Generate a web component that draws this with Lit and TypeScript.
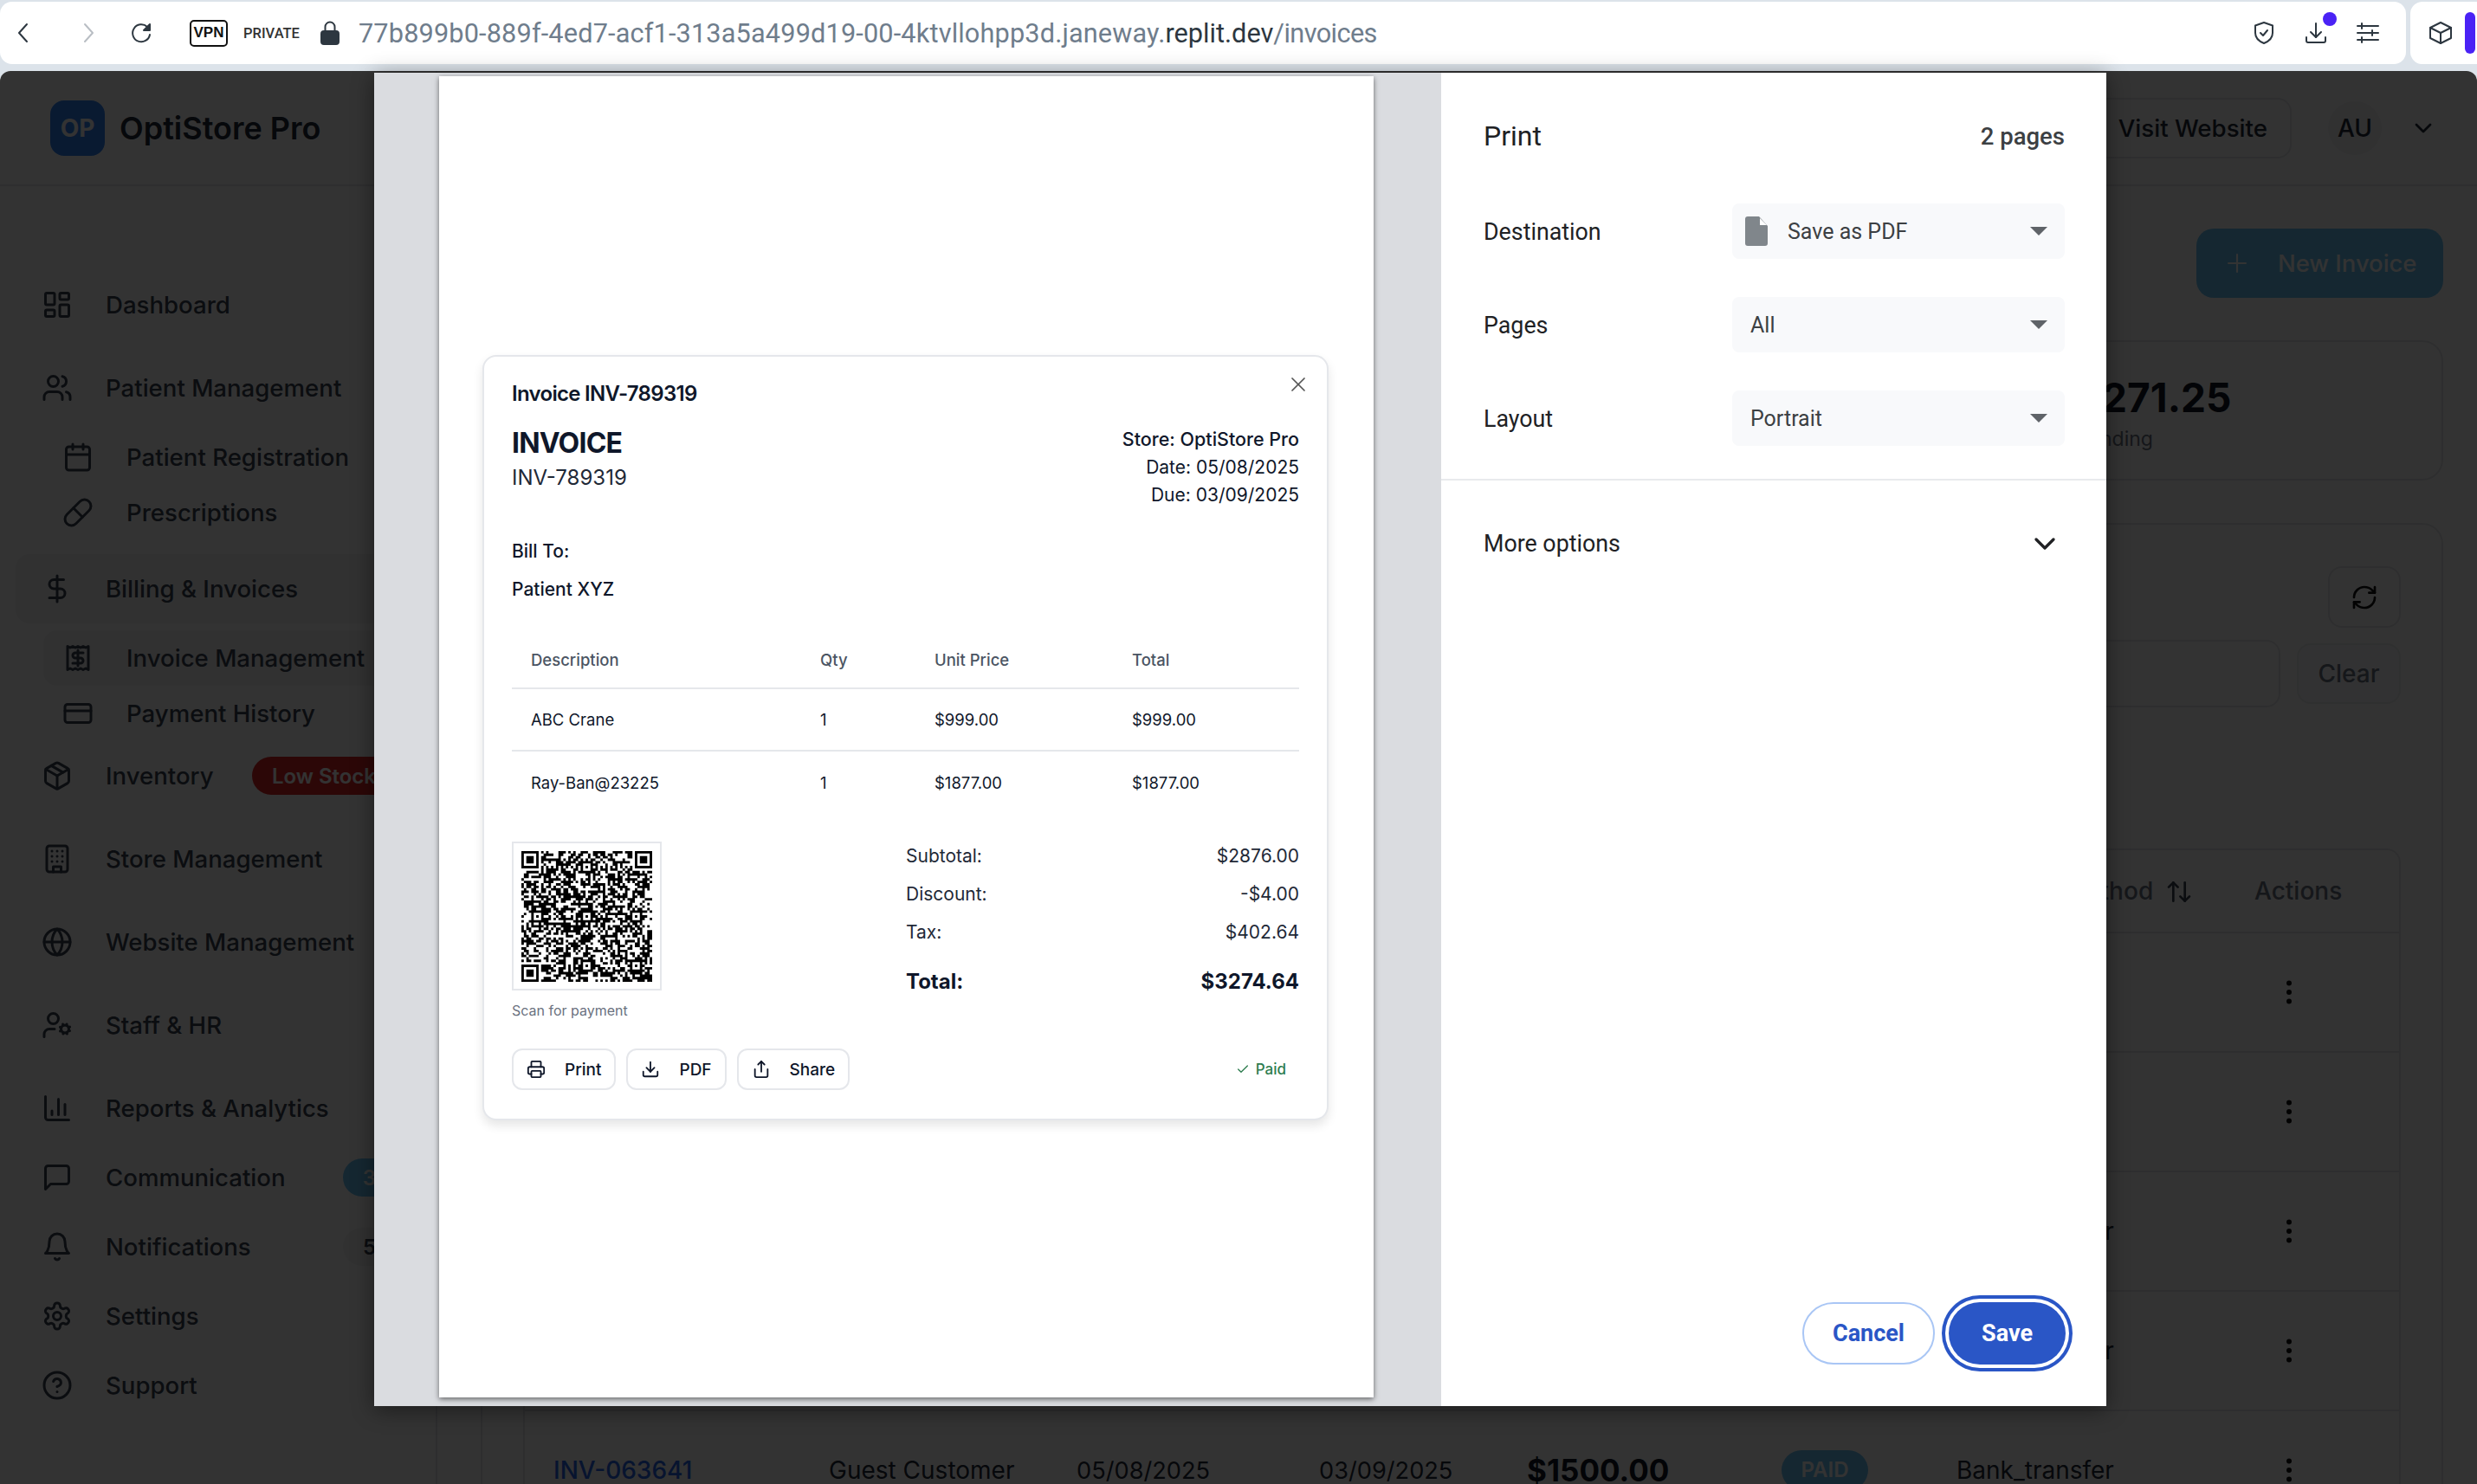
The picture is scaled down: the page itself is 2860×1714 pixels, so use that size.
import { LitElement, html, css, svg } from 'lit';
import { customElement } from 'lit/decorators.js';

// lucide style icons, stroke is drawn by the wrapper below
const ICONS: Record<string, any> = {
  dashboard: svg`<rect x="3" y="3" width="7" height="9" rx="1"/><rect x="14" y="3" width="7" height="5" rx="1"/><rect x="14" y="12" width="7" height="9" rx="1"/><rect x="3" y="16" width="7" height="5" rx="1"/>`,
  users: svg`<path d="M16 21v-2a4 4 0 0 0-4-4H6a4 4 0 0 0-4 4v2"/><circle cx="9" cy="7" r="4"/><path d="M22 21v-2a4 4 0 0 0-3-3.87"/><path d="M16 3.13a4 4 0 0 1 0 7.75"/>`,
  calendar: svg`<path d="M8 2v4"/><path d="M16 2v4"/><rect x="3" y="4" width="18" height="18" rx="2"/><path d="M3 10h18"/>`,
  pill: svg`<path d="m10.5 20.5 10-10a4.95 4.95 0 1 0-7-7l-10 10a4.95 4.95 0 1 0 7 7Z"/><path d="m8.5 8.5 7 7"/>`,
  dollar: svg`<line x1="12" y1="2" x2="12" y2="22"/><path d="M17 5H9.5a3.5 3.5 0 0 0 0 7h5a3.5 3.5 0 0 1 0 7H6"/>`,
  receipt: svg`<path d="M4 3v18l2-1 2 1 2-1 2 1 2-1 2 1 2-1 2 1V3l-2 1-2-1-2 1-2-1-2 1-2-1-2 1Z"/><path d="M16 8h-6a2 2 0 1 0 0 4h4a2 2 0 1 1 0 4H8"/><path d="M12 18v-12"/>`,
  card: svg`<rect x="2" y="5" width="20" height="14" rx="2"/><line x1="2" y1="10" x2="22" y2="10"/>`,
  box: svg`<path d="m7.5 4.27 9 5.15"/><path d="M21 8a2 2 0 0 0-1-1.73l-7-4a2 2 0 0 0-2 0l-7 4A2 2 0 0 0 3 8v8a2 2 0 0 0 1 1.73l7 4a2 2 0 0 0 2 0l7-4A2 2 0 0 0 21 16Z"/><path d="m3.3 7 8.7 5 8.7-5"/><path d="M12 22V12"/>`,
  store: svg`<rect x="4" y="2" width="16" height="20" rx="2"/><path d="M9 22v-4h6v4"/><path d="M8 6h.01M12 6h.01M16 6h.01M8 10h.01M12 10h.01M16 10h.01M8 14h.01M12 14h.01M16 14h.01"/>`,
  globe: svg`<circle cx="12" cy="12" r="10"/><path d="M12 2a14.5 14.5 0 0 0 0 20 14.5 14.5 0 0 0 0-20"/><path d="M2 12h20"/>`,
  staff: svg`<circle cx="18" cy="15" r="3"/><circle cx="9" cy="7" r="4"/><path d="M10 15H6a4 4 0 0 0-4 4v2"/><path d="m21.7 16.4-.9-.3M15.2 13.9l-.9-.3M16.6 18.7l.3-.9M19.1 12.2l.3-.9M19.6 18.7l-.4-1M16.8 12.3l-.4-1M14.3 16.6l1-.4M20.7 13.8l1-.4"/>`,
  chart: svg`<path d="M3 3v16a2 2 0 0 0 2 2h16"/><path d="M18 17V9"/><path d="M13 17V5"/><path d="M8 17v-3"/>`,
  message: svg`<path d="M21 15a2 2 0 0 1-2 2H7l-4 4V5a2 2 0 0 1 2-2h14a2 2 0 0 1 2 2z"/>`,
  bell: svg`<path d="M6 8a6 6 0 0 1 12 0c0 7 3 9 3 9H3s3-2 3-9"/><path d="M10.3 21a1.94 1.94 0 0 0 3.4 0"/>`,
  settings: svg`<path d="M12.22 2h-.44a2 2 0 0 0-2 2v.18a2 2 0 0 1-1 1.73l-.43.25a2 2 0 0 1-2 0l-.15-.08a2 2 0 0 0-2.73.73l-.22.38a2 2 0 0 0 .73 2.73l.15.1a2 2 0 0 1 1 1.72v.51a2 2 0 0 1-1 1.74l-.15.09a2 2 0 0 0-.73 2.73l.22.38a2 2 0 0 0 2.73.73l.15-.08a2 2 0 0 1 2 0l.43.25a2 2 0 0 1 1 1.73V20a2 2 0 0 0 2 2h.44a2 2 0 0 0 2-2v-.18a2 2 0 0 1 1-1.73l.43-.25a2 2 0 0 1 2 0l.15.08a2 2 0 0 0 2.73-.73l.22-.39a2 2 0 0 0-.73-2.73l-.15-.08a2 2 0 0 1-1-1.74v-.5a2 2 0 0 1 1-1.74l.15-.09a2 2 0 0 0 .73-2.73l-.22-.38a2 2 0 0 0-2.73-.73l-.15.08a2 2 0 0 1-2 0l-.43-.25a2 2 0 0 1-1-1.73V4a2 2 0 0 0-2-2z"/><circle cx="12" cy="12" r="3"/>`,
  help: svg`<circle cx="12" cy="12" r="10"/><path d="M9.09 9a3 3 0 0 1 5.83 1c0 2-3 3-3 3"/><path d="M12 17h.01"/>`,
  printer: svg`<path d="M6 18H4a2 2 0 0 1-2-2v-5a2 2 0 0 1 2-2h16a2 2 0 0 1 2 2v5a2 2 0 0 1-2 2h-2"/><path d="M6 9V3a1 1 0 0 1 1-1h10a1 1 0 0 1 1 1v6"/><rect x="6" y="14" width="12" height="8" rx="1"/>`,
  download: svg`<path d="M21 15v4a2 2 0 0 1-2 2H5a2 2 0 0 1-2-2v-4"/><path d="m7 10 5 5 5-5"/><path d="M12 15V3"/>`,
  share: svg`<path d="M4 12v8a2 2 0 0 0 2 2h12a2 2 0 0 0 2-2v-8"/><path d="m16 6-4-4-4 4"/><path d="M12 2v13"/>`,
  check: svg`<path d="M20 6 9 17l-5-5"/>`,
  close: svg`<path d="M18 6 6 18"/><path d="m6 6 12 12"/>`,
  chevron: svg`<path d="m6 9 6 6 6-6"/>`,
  plus: svg`<path d="M5 12h14"/><path d="M12 5v14"/>`,
  refresh: svg`<path d="M3 12a9 9 0 0 1 9-9 9.75 9.75 0 0 1 6.74 2.74L21 8"/><path d="M21 3v5h-5"/><path d="M21 12a9 9 0 0 1-9 9 9.75 9.75 0 0 1-6.74-2.74L3 16"/><path d="M8 16H3v5"/>`,
  sort: svg`<path d="m21 16-4 4-4-4"/><path d="M17 20V4"/><path d="m3 8 4-4 4 4"/><path d="M7 4v16"/>`,
  kebab: svg`<circle cx="12" cy="5" r="1"/><circle cx="12" cy="12" r="1"/><circle cx="12" cy="19" r="1"/>`,
};

function icon(name: string) {
  return html`<svg class="ic" viewBox="0 0 24 24" fill="none" stroke="currentColor" stroke-width="2" stroke-linecap="round" stroke-linejoin="round">${ICONS[name]}</svg>`;
}

const iconBase = css`
  .ic { width: 36px; height: 36px; flex: none; display: block; }
`;

// fake qr: real structure (finders, timing, alignment) with seeded noise for the data
function qrPath(): string {
  const n = 53;
  let seed = 789319;
  const rnd = () => {
    seed = (seed * 1664525 + 1013904223) >>> 0;
    return (seed >>> 16) / 65536;
  };
  const grid: boolean[][] = [];
  for (let y = 0; y < n; y++) {
    grid.push([]);
    for (let x = 0; x < n; x++) grid[y].push(rnd() < 0.55);
  }
  const finder = (ox: number, oy: number) => {
    for (let y = -1; y < 8; y++) for (let x = -1; x < 8; x++) {
      const gx = ox + x, gy = oy + y;
      if (gx < 0 || gy < 0 || gx >= n || gy >= n) continue;
      const inside = x >= 0 && x < 7 && y >= 0 && y < 7;
      const ring = x === 0 || x === 6 || y === 0 || y === 6;
      const core = x >= 2 && x <= 4 && y >= 2 && y <= 4;
      grid[gy][gx] = inside && (ring || core);
    }
  };
  for (let i = 8; i < n - 8; i++) { grid[6][i] = i % 2 === 0; grid[i][6] = i % 2 === 0; }
  const align = (cx: number, cy: number) => {
    for (let y = -2; y <= 2; y++) for (let x = -2; x <= 2; x++) {
      grid[cy + y][cx + x] = Math.max(Math.abs(x), Math.abs(y)) !== 1;
    }
  };
  [[26, 6], [6, 26], [26, 26], [46, 26], [26, 46], [46, 46]].forEach(([x, y]) => align(x, y));
  finder(0, 0); finder(n - 7, 0); finder(0, n - 7);
  let d = '';
  grid.forEach((row, y) => row.forEach((on, x) => { if (on) d += `M${x} ${y}h1v1h-1z`; }));
  return d;
}

const NAV = [
  { label: 'Dashboard', icon: 'dashboard', spaced: true },
  { label: 'Patient Management', icon: 'users', subs: [
    { label: 'Patient Registration', icon: 'calendar' },
    { label: 'Prescriptions', icon: 'pill' },
  ] },
  { label: 'Billing & Invoices', icon: 'dollar', active: true, subs: [
    { label: 'Invoice Management', icon: 'receipt', active: true },
    { label: 'Payment History', icon: 'card' },
  ] },
  { label: 'Inventory', icon: 'box', badge: 'Low Stock', badgeCls: 'red', spaced: true },
  { label: 'Store Management', icon: 'store', spaced: true },
  { label: 'Website Management', icon: 'globe', spaced: true },
  { label: 'Staff & HR', icon: 'staff', spaced: true },
  { label: 'Reports & Analytics', icon: 'chart' },
  { label: 'Communication', icon: 'message', badge: '3', badgeCls: 'blue' },
  { label: 'Notifications', icon: 'bell', badge: '5', badgeCls: 'gray' },
  { label: 'Settings', icon: 'settings' },
  { label: 'Support', icon: 'help' },
] as any[];

// only what shows past the print dialog is filled in
const ROWS = [
  { method: '' },
  { method: '' },
  { method: 'Bank_transfer' },
  { method: 'Bank_transfer' },
  { id: 'INV-063641', name: 'Guest Customer', issued: '05/08/2025', due: '03/09/2025', amount: '$1500.00', paid: true, method: 'Bank_transfer' },
] as any[];

@customElement('browser-bar')
class BrowserBar extends LitElement {
  static styles = css`
    :host { display: flex; gap: 5px; height: 82px; padding-top: 2px; box-sizing: border-box; background: #dce3ea; }
    .box { background: #fff; height: 72px; border-radius: 14px; display: flex; align-items: center; }
    .main { width: 2778px; flex: none; padding: 0 31px 0 14px; box-sizing: border-box; }
    .side { flex: 1; border-radius: 14px 0 0 14px; padding-left: 22px; gap: 15px; }
    svg { display: block; flex: none; fill: none; stroke: #2d3740; stroke-width: 2; stroke-linecap: round; stroke-linejoin: round; }
    .nav { width: 26px; height: 26px; }
    .fwd { margin-left: 49px; stroke: #b9bec4; }
    .reload { margin-left: 36px; }
    .vpn { margin-left: 42px; width: 44px; height: 31px; box-sizing: border-box; border: 2px solid #111; border-radius: 5px; font: 600 17px "Liberation Sans", sans-serif; color: #111; display: flex; align-items: center; justify-content: center; }
    .private { margin-left: 18px; font: 500 16.5px Roboto, sans-serif; color: #333; }
    .lock { margin-left: 24px; width: 22px; height: 28px; }
    .url { margin-left: 22px; font: 400 30.7px Roboto, sans-serif; color: #6f7d8c; white-space: nowrap; letter-spacing: 0.15px; }
    .url b { font-weight: 400; color: #2d3740; letter-spacing: 0; }
    .url i { font-style: normal; letter-spacing: -0.6px; }
    .tools { margin-left: auto; display: flex; gap: 34px; position: relative; }
    .tools svg { width: 26px; height: 26px; }
    .dot { position: absolute; left: 81px; top: -11px; width: 16px; height: 16px; border-radius: 50%; background: #4a22f5; }
    .bar { width: 12px; height: 48px; border-radius: 6px; background: #4a22f5; }
    .cube { width: 26px; height: 26px; }
  `;

  render() {
    return html`
      <div class="box main">
        <svg class="nav" viewBox="0 0 26 26"><path d="M17 3 8 13l9 10"/></svg>
        <svg class="nav fwd" viewBox="0 0 26 26"><path d="m9 3 9 10-9 10"/></svg>
        <svg class="nav reload" viewBox="0 0 26 26"><path d="M19 6a10 10 0 1 0 3 9"/><path d="M22 3v7h-7z" fill="#2d3740"/></svg>
        <div class="vpn">VPN</div>
        <div class="private">PRIVATE</div>
        <svg class="lock" viewBox="0 0 22 28"><path d="M5.5 13V7a5.5 5.5 0 0 1 11 0v6"/><rect x="1" y="12" width="20" height="15" rx="3" fill="#2d3740"/></svg>
        <div class="url">77b899b0-889f-4ed7-acf1-313a5a499d19-00-4ktvllohpp3d.janeway.<b>replit.dev</b><i>/invoices</i></div>
        <div class="tools">
          <svg viewBox="0 0 26 26"><path d="M13 1 23 4.5V13c0 6-5 10-10 12C8 23 3 19 3 13V4.500Z"/><path d="m9 13 3 3 5-6"/></svg>
          <svg viewBox="0 0 26 26"><path d="M13 2v16"/><path d="m7 12 6 6 6-6"/><path d="M2 18v4a2 2 0 0 0 2 2h18a2 2 0 0 0 2-2v-4"/></svg>
          <svg viewBox="0 0 26 26"><path d="M1 5h24M1 13h24M1 21h24M6 2v6M18 10v6M6 18v6"/></svg>
          <span class="dot"></span>
        </div>
      </div>
      <div class="box side">
        <svg class="cube" viewBox="0 0 26 26"><path d="M13 1 25 7v12l-12 6-12-6V7Z"/><path d="m1 7 12 6 12-6"/><path d="M13 13v12"/></svg>
        <div class="bar"></div>
      </div>
    `;
  }
}

@customElement('store-sidebar')
class StoreSidebar extends LitElement {
  static styles = [iconBase, css`
    :host { display: block; width: 505px; flex: none; box-sizing: border-box; border-right: 2px solid #e5e7eb; font-family: Inter, sans-serif; color: #374151; }
    .brand { height: 133px; border-bottom: 2px solid #e5e7eb; box-sizing: border-box; display: flex; align-items: center; gap: 17px; padding-left: 58px; }
    .logo { width: 63px; height: 64px; border-radius: 16px; background: #3182f6; color: #fff; font-weight: 700; font-size: 28px; display: flex; align-items: center; justify-content: center; }
    .name { font-size: 36px; font-weight: 600; color: #1f2937; }
    nav { padding: 97px 16px 0 18px; }
    .item { height: 80px; border-radius: 16px; padding: 0 30px; display: flex; align-items: center; gap: 38px; font-size: 27.6px; font-weight: 500; white-space: nowrap; }
    .item.spaced { margin-bottom: 16px; }
    .item.active, .sub.active { background: #f3f4f6; }
    .subs { padding: 8px 0 0 32px; }
    .subs.gap { margin-bottom: 16px; }
    .sub { height: 64px; border-radius: 16px; padding-left: 22px; display: flex; align-items: center; gap: 38px; font-size: 27.6px; font-weight: 500; white-space: nowrap; }
    .badge { margin-left: auto; height: 44px; border-radius: 22px; padding: 0 23px; display: flex; align-items: center; font-size: 24px; font-weight: 600; }
    .red { background: #dc2626; color: #fff; }
    .blue { background: #69c3f5; color: #fff; }
    .gray { background: #f3f4f6; color: #374151; }
  `];

  render() {
    return html`
      <div class="brand"><div class="logo">OP</div><div class="name">OptiStore Pro</div></div>
      <nav>
        ${NAV.map((n, i) => html`
          <div class="item ${n.spaced ? 'spaced' : ''} ${n.active ? 'active' : ''}">
            ${icon(n.icon)}<span>${n.label}</span>
            ${n.badge ? html`<span class="badge ${n.badgeCls}">${n.badge}</span>` : ''}
          </div>
          ${n.subs ? html`<div class="subs ${i === 1 ? 'gap' : ''}">
            ${n.subs.map((s: any) => html`<div class="sub ${s.active ? 'active' : ''}">${icon(s.icon)}<span>${s.label}</span></div>`)}
          </div>` : ''}
        `)}
      </nav>
    `;
  }
}

@customElement('invoice-main')
class InvoiceMain extends LitElement {
  static styles = [iconBase, css`
    :host { display: block; flex: 1; min-width: 0; font-family: Inter, sans-serif; color: #1f2937; }
    .head { height: 133px; box-sizing: border-box; border-bottom: 2px solid #e5e7eb; display: flex; align-items: center; justify-content: flex-end; padding-right: 46px; }
    .visit { height: 70px; box-sizing: border-box; border: 2px solid #e5e7eb; border-radius: 16px; padding: 0 26px; display: flex; align-items: center; font-size: 27.7px; font-weight: 500; }
    .au { width: 62px; height: 62px; border-radius: 50%; background: #f3f4f6; margin: 0 32px 0 42px; display: flex; align-items: center; justify-content: center; font-size: 28px; font-weight: 500; }
    .head .ic { width: 32px; height: 32px; }
    .body { padding: 49px 39px 0 50px; }
    .title { display: flex; justify-content: flex-end; align-items: center; height: 80px; }
    .new { width: 285px; height: 80px; border-radius: 20px; background: #69c3f5; color: #fff; display: flex; align-items: center; padding-left: 30px; box-sizing: border-box; gap: 30px; font-size: 27.4px; font-weight: 500; }
    .new .ic { width: 34px; height: 34px; stroke-width: 1.5; }
    .stats { margin-top: 49px; height: 162px; box-sizing: border-box; border: 2px solid #e5e7eb; border-radius: 24px; display: flex; justify-content: flex-end; align-items: center; }
    .stat { width: 422px; padding-top: 8px; }
    .value { font-size: 46px; font-weight: 700; line-height: 58px; color: #111827; }
    .label { font-size: 23px; line-height: 38px; color: #6b7280; }
    .panel { margin-top: 49px; border: 2px solid #e5e7eb; border-radius: 24px; padding: 48px 47px 0 47px; }
    .top { display: flex; justify-content: flex-end; }
    .refresh { width: 84px; height: 71px; border: 2px solid #e5e7eb; border-radius: 16px; display: flex; align-items: center; justify-content: center; box-sizing: border-box; color: #111; }
    .refresh .ic { width: 32px; height: 32px; }
    .filters { display: flex; justify-content: flex-end; align-items: center; gap: 19px; margin-top: 14px; }
    .input { width: 600px; height: 78px; box-sizing: border-box; border: 2px solid #e5e7eb; border-radius: 16px; }
    .clear { width: 120px; height: 70px; box-sizing: border-box; border: 2px solid #eceef1; background: #fbfbfc; border-radius: 16px; display: flex; align-items: center; justify-content: center; font-size: 28px; font-weight: 500; color: #6b7280; }
    .table { margin-top: 163px; border: 2px solid #e5e7eb; border-radius: 16px 16px 0 0; }
    .row { display: grid; grid-template-columns: 318px 286px 280px 240px 294px 202px 344px 1fr; align-items: center; height: 138px; border-bottom: 2px solid #e5e7eb; box-sizing: border-box; font-size: 28px; }
    .row > * { padding-left: 33px; white-space: nowrap; }
    .hdr { height: 96px; font-weight: 500; color: #6b7280; }
    .hdr .ic { width: 32px; height: 32px; display: inline-block; vertical-align: -7px; margin-left: 14px; color: #374151; }
    .link { color: #2563eb; font-weight: 500; }
    .date { font-size: 27.200px; }
    .amt { font-size: 35px; font-weight: 700; color: #111827; }
    .paid span { display: inline-block; width: 100px; height: 46px; line-height: 46px; text-align: center; background: #69c3f5; color: #fff; border-radius: 23px; font-size: 24px; font-weight: 600; }
    .menu { padding-left: 55px !important; color: #111; }
  `];

  render() {
    return html`
      <div class="head">
        <div class="visit">Visit Website</div>
        <div class="au">AU</div>
        ${icon('chevron')}
      </div>
      <div class="body">
        <div class="title"><div class="new">${icon('plus')}New Invoice</div></div>
        <div class="stats">
          <div class="stat"><div class="value">$271.25</div><div class="label">Pending</div></div>
        </div>
        <div class="panel">
          <div class="top"><div class="refresh">${icon('refresh')}</div></div>
          <div class="filters"><div class="input"></div><div class="clear">Clear</div></div>
          <div class="table">
            <div class="row hdr">
              <div></div><div></div><div></div><div></div><div></div><div></div>
              <div>Payment Method${icon('sort')}</div><div>Actions</div>
            </div>
            ${ROWS.map(r => html`
              <div class="row">
                <div class="link">${r.id}</div><div>${r.name}</div><div class="date">${r.issued}</div><div class="date">${r.due}</div>
                <div class="amt">${r.amount}</div><div class="paid">${r.paid ? html`<span>PAID</span>` : ''}</div>
                <div>${r.method}</div><div class="menu">${icon('kebab')}</div>
              </div>
            `)}
          </div>
        </div>
      </div>
    `;
  }
}

@customElement('print-dialog')
class PrintDialog extends LitElement {
  static styles = [iconBase, css`
    :host { position: absolute; left: 432px; top: 84px; width: 2000px; height: 1540px; display: flex; box-shadow: 0 4px 24px rgba(0, 0, 0, .45); background: #fff; }
    .preview { width: 1232px; flex: none; background: #dadce0; padding: 4px 0 0 75px; box-sizing: border-box; overflow: hidden; font-family: Inter, sans-serif; color: #0f172a; }
    .sheet { width: 1079px; height: 1526px; background: #fff; box-shadow: 0 2px 6px rgba(0, 0, 0, .55); padding: 322px 0 0 50px; box-sizing: border-box; }
    .card { position: relative; width: 977px; height: 884px; box-sizing: border-box; border: 2px solid #e5e7eb; border-radius: 16px; padding: 25px 32px 0; box-shadow: 0 6px 12px rgba(0, 0, 0, .1); background: #fff; }
    .x { position: absolute; right: 19px; top: 18px; color: #555; }
    .x .ic { width: 28px; height: 28px; stroke-width: 1.5; }
    .inv-title { font-size: 24px; line-height: 36px; font-weight: 600; letter-spacing: -0.7px; }
    .top { display: flex; justify-content: space-between; margin-top: 18px; }
    h2 { margin: 0; font-size: 32px; line-height: 42px; font-weight: 700; letter-spacing: -0.8px; }
    .num { font-size: 24px; line-height: 36px; margin-top: 1px; color: #1f2937; }
    .store { text-align: right; font-size: 21px; line-height: 32.7px; }
    .store div:first-child { font-weight: 500; font-size: 21.5px; }
    .bill { margin-top: 32px; font-size: 21px; line-height: 32px; font-weight: 500; }
    .patient { margin-top: 12px; font-size: 21px; line-height: 32px; font-weight: 500; }
    .table { margin-top: 32px; font-size: 18.500px; }
    .tr { display: grid; grid-template-columns: 334px 132px 228px 1fr; padding-left: 22px; align-items: center; height: 72px; border-bottom: 2px solid #e5e7eb; box-sizing: border-box; }
    .tr.th { height: 67px; color: #4b5563; font-weight: 500; }
    .tr:last-child { border-bottom: 0; }
    .foot { display: flex; justify-content: space-between; align-items: flex-start; margin-top: 26px; }
    .qr { margin-top: 6px; width: 173px; height: 172px; box-sizing: border-box; border: 2px solid #e5e7eb; display: flex; align-items: center; justify-content: center; }
    .qr svg { width: 151px; height: 151px; display: block; }
    .scan { margin-top: 11px; font-size: 16px; line-height: 24px; color: #6b7280; }
    .totals { width: 454px; font-size: 21px; }
    .line { display: flex; justify-content: space-between; height: 44px; align-items: center; color: #1f2937; }
    .line.total { margin-top: 13px; font-size: 24px; font-weight: 700; color: #0f172a; }
    .actions { display: flex; align-items: center; gap: 12px; margin-top: 32px; }
    .btn { height: 48px; box-sizing: border-box; border: 2px solid #e5e7eb; border-radius: 12px; padding: 0 15px; display: flex; align-items: center; gap: 22px; font-size: 19px; font-weight: 500; }
    .btn .ic { width: 22px; height: 22px; }
    .status { margin-left: auto; padding-right: 15px; display: flex; align-items: center; gap: 7px; font-size: 17px; font-weight: 500; color: #2e7d4f; }
    .status .ic { width: 16px; height: 16px; }

    .panel { flex: 1; display: flex; flex-direction: column; font-family: Roboto, sans-serif; color: #202124; }
    .p-head { display: flex; justify-content: space-between; align-items: center; height: 50px; margin: 48px 48px 53px 49px; }
    .p-title { font-size: 32px; }
    .p-count { font-size: 27.500px; font-weight: 500; color: #3c4043; }
    .field { display: flex; justify-content: space-between; align-items: center; margin: 0 48px 44px 49px; font-size: 26.800px; }
    .field > span { padding-top: 2px; }
    .select { width: 384px; height: 64px; border-radius: 8px; background: #f8f9fb; display: flex; align-items: center; padding: 0 20px 0 21px; box-sizing: border-box; font-size: 25px; color: #3c4043; }
    .select .arrow { margin-left: auto; width: 0; height: 0; border: 10px solid transparent; border-top: 10px solid #5f6368; border-bottom: 0; }
    .select.pdf { padding-left: 15px; gap: 23px; }
    .doc { width: 26px; height: 34px; display: block; flex: none; }
    .rule { height: 2px; background: #e8eaed; margin-top: -6px; }
    .more { display: flex; justify-content: space-between; align-items: center; height: 145px; padding: 0 49px; font-size: 26.800px; }
    .more .ic { width: 40px; height: 40px; margin-right: 2px; stroke-width: 2; }
    .btns { margin-top: auto; display: flex; justify-content: flex-end; gap: 16px; padding: 0 47px 48px 0; }
    .pill { height: 72px; box-sizing: border-box; border-radius: 36px; display: flex; align-items: center; justify-content: center; font-size: 27px; font-weight: 700; }
    .cancel { width: 153px; border: 2px solid #a9c6f5; color: #2a56c6; }
    .save { width: 135px; background: #2a56c6; color: #fff; box-shadow: 0 0 0 4px #fff, 0 0 0 8px #2a56c6; }
  `];

  private qr = qrPath();

  render() {
    const fields = [['Pages', 'All'], ['Layout', 'Portrait']];
    return html`
      <div class="preview">
        <div class="sheet">
          <div class="card">
            <div class="x">${icon('close')}</div>
            <div class="inv-title">Invoice INV-789319</div>
            <div class="top">
              <div><h2>INVOICE</h2><div class="num">INV-789319</div></div>
              <div class="store"><div>Store: OptiStore Pro</div><div>Date: 05/08/2025</div><div>Due: 03/09/2025</div></div>
            </div>
            <div class="bill">Bill To:</div>
            <div class="patient">Patient XYZ</div>
            <div class="table">
              <div class="tr th"><div>Description</div><div>Qty</div><div>Unit Price</div><div>Total</div></div>
              <div class="tr"><div>ABC Crane</div><div>1</div><div>$999.00</div><div>$999.00</div></div>
              <div class="tr"><div>Ray-Ban@23225</div><div>1</div><div>$1877.00</div><div>$1877.00</div></div>
            </div>
            <div class="foot">
              <div>
                <div class="qr"><svg viewBox="0 0 53 53"><path d=${this.qr} fill="#000"/></svg></div>
                <div class="scan">Scan for payment</div>
              </div>
              <div class="totals">
                <div class="line"><span>Subtotal:</span><span>$2876.00</span></div>
                <div class="line"><span>Discount:</span><span>-$4.00</span></div>
                <div class="line"><span>Tax:</span><span>$402.64</span></div>
                <div class="line total"><span>Total:</span><span>$3274.64</span></div>
              </div>
            </div>
            <div class="actions">
              <div class="btn">${icon('printer')}Print</div>
              <div class="btn">${icon('download')}PDF</div>
              <div class="btn">${icon('share')}Share</div>
              <div class="status">${icon('check')}Paid</div>
            </div>
          </div>
        </div>
      </div>
      <div class="panel">
        <div class="p-head"><div class="p-title">Print</div><div class="p-count">2 pages</div></div>
        <div class="field">
          <span>Destination</span>
          <div class="select pdf">
            <svg class="doc" viewBox="0 0 26 34"><path d="M3 0h13l10 11v20a3 3 0 0 1-3 3H3a3 3 0 0 1-3-3V3a3 3 0 0 1 3-3Z" fill="#80868b"/><path d="M17 2v8h8z" fill="#fff"/></svg>
            <span>Save as PDF</span><span class="arrow"></span>
          </div>
        </div>
        ${fields.map(([label, value]) => html`
          <div class="field"><span>${label}</span><div class="select"><span>${value}</span><span class="arrow"></span></div></div>
        `)}
        <div class="rule"></div>
        <div class="more"><span>More options</span>${icon('chevron')}</div>
        <div class="btns"><div class="pill cancel">Cancel</div><div class="pill save">Save</div></div>
      </div>
    `;
  }
}

@customElement('app-root')
class AppRoot extends LitElement {
  static styles = css`
    :host { display: block; position: relative; width: 2860px; height: 1714px; overflow: hidden; background: #dce3ea; }
    .page { position: relative; height: 1632px; display: flex; overflow: hidden; background: #fff; border-radius: 12px 12px 0 0; }
    .scrim { position: absolute; inset: 0; background: rgba(0, 0, 0, .8); }
  `;

  render() {
    return html`
      <browser-bar></browser-bar>
      <div class="page">
        <store-sidebar></store-sidebar>
        <invoice-main></invoice-main>
        <div class="scrim"></div>
      </div>
      <print-dialog></print-dialog>
    `;
  }
}
